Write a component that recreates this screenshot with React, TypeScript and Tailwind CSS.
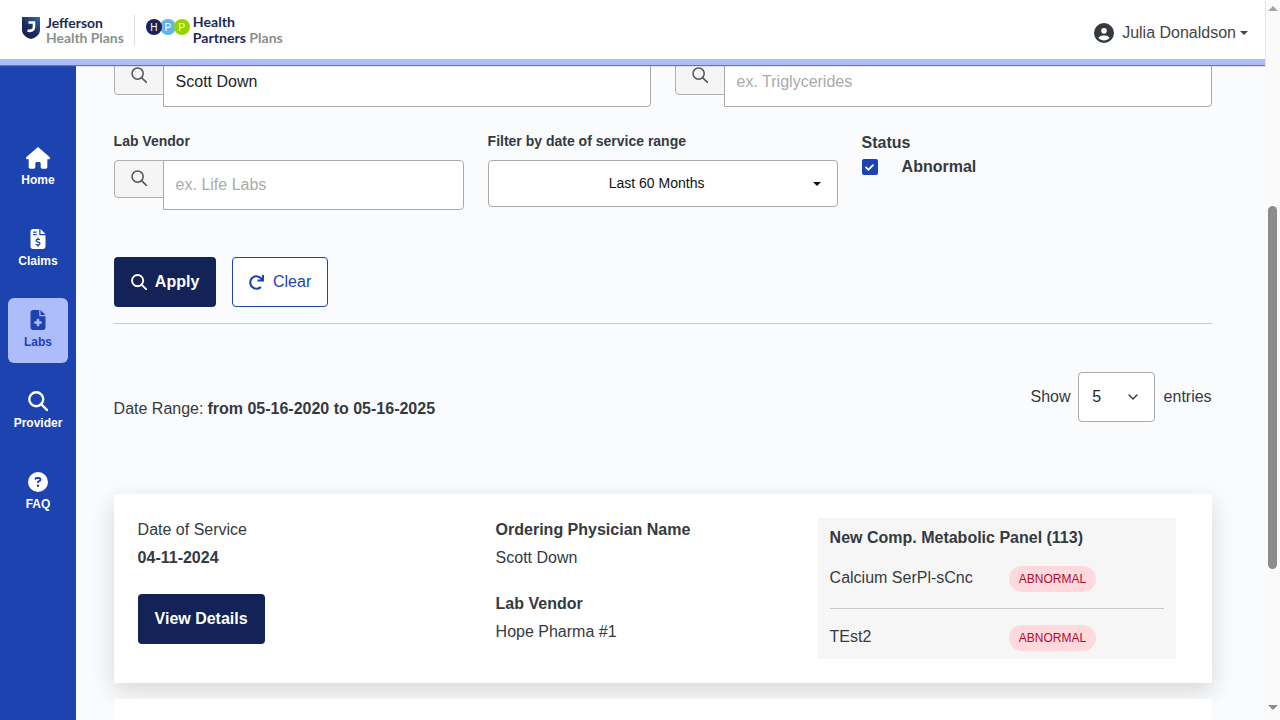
import { ChevronDown } from 'lucide-react'
import { FaCheck, FaRedo } from 'react-icons/fa'
import { FaCircleQuestion, FaCircleUser, FaFileInvoiceDollar, FaFileMedical, FaHouse } from 'react-icons/fa6'

function SearchIcon({ size, weight, className }: { size: number; weight: number; className?: string }) {
  return (
    <svg width={size} height={size} viewBox="0 0 16 16" fill="none" stroke="currentColor" strokeWidth={weight} className={className}>
      <circle cx="6.6" cy="6.6" r="5.6" />
      <path d="M10.6 10.6L15.4 15.4" strokeLinecap="round" />
    </svg>
  )
}

const navItems = [
  { label: 'Home', icon: <FaHouse size={24} /> },
  { label: 'Claims', icon: <FaFileInvoiceDollar size={20} /> },
  { label: 'Labs', icon: <FaFileMedical size={20} />, active: true },
  { label: 'Provider', icon: <SearchIcon size={20} weight={1.9} /> },
  { label: 'FAQ', icon: <FaCircleQuestion size={20} /> },
]

function Logos() {
  return (
    <div className="flex items-center">
      {/* Jefferson shield */}
      <svg width="18" height="22" viewBox="0 0 18 22" className="mr-[6px] mb-[3px]">
        <defs>
          <linearGradient id="shield" x1="1" y1="0" x2="0.3" y2="1">
            <stop offset="0" stopColor="#2f6db0" />
            <stop offset="0.6" stopColor="#1c2a5a" />
            <stop offset="1" stopColor="#14244f" />
          </linearGradient>
        </defs>
        <path d="M0 0H18V13C18 18 13 21 9 22C5 21 0 18 0 13Z" fill="url(#shield)" />
        <path d="M6.5 5.5H12V10C12 13 9 14.5 5.5 13.5" fill="none" stroke="#fff" strokeWidth="2.6" />
      </svg>
      <div className="font-['Lato',sans-serif] text-[13.9px] leading-[15px] font-bold">
        <div className="text-[#1c2a5a]">Jefferson</div>
        <div className="text-[#8b8f8c]">Health Plans</div>
      </div>
      <div className="ml-[10px] mr-[11px] h-[30px] w-px bg-[#dcdcdc]" />
      <div className="flex mr-[3px] mb-[5px] font-['Liberation_Sans',sans-serif] text-[10px] text-white">
        <div className="w-[16px] h-[16px] rounded-full bg-[#1c2457] flex items-center justify-center z-10">H</div>
        <div className="w-[16px] h-[16px] rounded-full bg-[#62b5e5] flex items-center justify-center -ml-[2px]">P</div>
        <div className="w-[16px] h-[16px] rounded-full bg-[#93d500] flex items-center justify-center -ml-[2px]">P</div>
      </div>
      <div className="font-['Lato',sans-serif] text-[14.1px] leading-[16px] font-bold text-[#1c2a5a]">
        <div>Health</div>
        <div>
          Partners <span className="text-[#8b8f8c]">Plans</span>
        </div>
      </div>
    </div>
  )
}

function SearchInput({ value, placeholder, className }: { value?: string; placeholder: string; className: string }) {
  return (
    <div className={`flex items-start ${className}`}>
      <div className="w-[50px] h-[38px] shrink-0 rounded-l-[4px] border border-[#b0b0b0] bg-[#f5f5f5] flex items-center justify-center text-[#555]">
        <SearchIcon size={16} weight={1.5} className="-mt-[3px]" />
      </div>
      <div
        className={`flex-1 h-[50px] -ml-px border border-[#aaaaaa] rounded-r-[4px] bg-white px-3 flex items-center text-[16px] ${value ? 'text-[#212529]' : 'text-[#aaaaaa]'}`}
      >
        {value ?? placeholder}
      </div>
    </div>
  )
}

function Badge() {
  return (
    <span className="w-[87px] h-[26px] rounded-full bg-[#ffd9dd] text-[#b00d2c] text-[12px] flex items-center justify-center">
      ABNORMAL
    </span>
  )
}

function Scrollbar() {
  return (
    <div className="w-[15px] shrink-0 h-full bg-[#fafafa] flex flex-col items-center">
      <div className="mt-[6px] w-0 h-0 border-x-[5px] border-x-transparent border-b-[5px] border-b-[#a3a3a3]" />
      <div className="mt-[195px] w-[9px] h-[363px] rounded-[5px] bg-[#8c8c8c]" />
      <div className="mt-[136px] w-0 h-0 border-x-[5px] border-x-transparent border-t-[5px] border-t-[#8c8c8c]" />
    </div>
  )
}

export default function App() {
  return (
    <div className="flex h-screen overflow-hidden bg-[#fafbfd] font-['Liberation_Sans',Arial,sans-serif] text-[16px] text-[#343a40]">
      <div className="flex-1 min-w-0 flex flex-col h-full">
        {/* Header */}
        <header className="relative z-10 shrink-0 bg-white h-[65px] border-b-[6px] border-[#adbdfb] shadow-[0_1px_1px_#777] pl-[22px] pr-[17px] flex items-center justify-between">
          <Logos />
          <div className="flex items-center text-[#444] mt-[6px]">
            <FaCircleUser size={20} className="mr-[8px] text-[#343a40]" />
            <span>Julia Donaldson</span>
            <span className="ml-[4px] w-0 h-0 border-x-[4px] border-x-transparent border-t-[4px] border-t-[#444]" />
          </div>
        </header>

        <div className="flex flex-1 min-h-0">
          {/* Sidebar */}
          <nav className="w-[76px] shrink-0 bg-[#1c43b0] px-2 pt-[71px] flex flex-col gap-4">
            {navItems.map((item) => (
              <div
                key={item.label}
                className={`h-[65px] pb-[4px] rounded-[6px] flex flex-col items-center justify-center text-[12px] font-bold ${item.active ? 'bg-[#adbdfb] text-[#1c43b0]' : 'text-white'}`}
              >
                <div className="h-[24px] flex items-center justify-center mb-[3px]">{item.icon}</div>
                <span className="leading-[14px]">{item.label}</span>
              </div>
            ))}
          </nav>

          {/* Main */}
          <main className="flex-1 min-w-0 overflow-hidden pl-[37.6px] pr-[53.4px]">
            <div className="-mt-[8px] flex gap-6">
              <SearchInput value="Scott Down" placeholder="" className="flex-1" />
              <SearchInput placeholder="ex. Triglycerides" className="flex-1" />
            </div>

            <div className="mt-[24px] flex gap-6">
              <div className="w-[350px]">
                <label className="block text-[14px] font-bold leading-[20px] mb-[9px]">Lab Vendor</label>
                <SearchInput placeholder="ex. Life Labs" className="w-full" />
              </div>
              <div className="w-[350px]">
                <label className="block text-[14px] font-bold leading-[20px] mb-[9px]">Filter by date of service range</label>
                <div className="h-[47px] pr-3 rounded-[4px] border border-[#aaaaaa] bg-white flex items-center justify-center relative text-[14px] text-[#111]">
                  Last 60 Months
                  <span className="absolute right-[16px] top-[21px] w-0 h-0 border-x-[4px] border-x-transparent border-t-[4px] border-t-[#111]" />
                </div>
              </div>
              <div>
                <div className="font-bold leading-[20px] mt-[2px]">Status</div>
                <div className="mt-[2px] flex items-center">
                  <span className="w-4 h-4 rounded-[2px] bg-[#1c43b0] flex items-center justify-center text-white">
                    <FaCheck size={9} />
                  </span>
                  <span className="ml-[24px] font-bold">Abnormal</span>
                </div>
              </div>
            </div>

            <div className="mt-[47px] flex gap-4">
              <button className="w-[102px] h-[50px] pl-[1px] rounded-[4px] bg-[#132257] text-white font-bold flex items-center justify-center gap-[8px]">
                <SearchIcon size={16} weight={1.9} />
                Apply
              </button>
              <button className="w-[96px] h-[50px] pl-[1px] rounded-[4px] bg-white border border-[#1c43b0] text-[#1c43b0] flex items-center justify-center gap-[9px]">
                <FaRedo size={15} />
                Clear
              </button>
            </div>

            <div className="mt-4 h-px bg-[#c8c8c8]" />

            <div className="mt-12 flex justify-between items-start">
              <div className="mt-[27px] leading-[20px]">
                Date Range: <span className="-ml-[0.5px] font-bold">from 05-16-2020 to 05-16-2025</span>
              </div>
              <div className="flex items-center gap-2">
                <span>Show</span>
                <div className="-ml-[0.4px] mr-[0.4px] w-[77px] h-[50px] rounded-[4px] border border-[#aaaaaa] bg-white flex items-center justify-between pl-[13px] pr-[13px] text-[#212529]">
                  5
                  <ChevronDown size={16} strokeWidth={2} className="text-[#343a40]" />
                </div>
                <span>entries</span>
              </div>
            </div>

            {/* Result card */}
            <div className="mt-[72px] h-[189px] rounded-[2px] bg-white shadow-[0_8px_24px_rgba(0,0,0,0.15)] p-6 grid grid-cols-[358px_322px_358px]">
              <div>
                <div className="mt-px leading-[22px]">Date of Service</div>
                <div className="mt-[6px] font-bold leading-[22px]">04-11-2024</div>
                <button className="mt-[25px] w-[127px] h-[50px] rounded-[4px] bg-[#132257] text-white font-bold">View Details</button>
              </div>
              <div>
                <div className="mt-px font-bold leading-[22px]">Ordering Physician Name</div>
                <div className="mt-[6px] leading-[22px]">Scott Down</div>
                <div className="mt-[24px] font-bold leading-[22px]">Lab Vendor</div>
                <div className="mt-[6px] leading-[22px]">Hope Pharma #1</div>
              </div>
              <div className="h-[141px] bg-[#f6f6f6] px-3 pt-[9px]">
                <div className="font-bold leading-[22px]">New Comp. Metabolic Panel (113)</div>
                <div className="mt-[17px] h-[26px] flex items-center">
                  <span className="w-[179.4px] -mt-[2px]">Calcium SerPl-sCnc</span>
                  <Badge />
                </div>
                <div className="mt-[16px] h-px bg-[#c8c8c8]" />
                <div className="mt-[16px] h-[26px] flex items-center">
                  <span className="w-[179.4px] -mt-[2px]">TEst2</span>
                  <Badge />
                </div>
              </div>
            </div>

            <div className="relative mt-4 h-[189px] rounded-[2px] bg-white" />
          </main>
        </div>
      </div>
      <Scrollbar />
    </div>
  )
}
